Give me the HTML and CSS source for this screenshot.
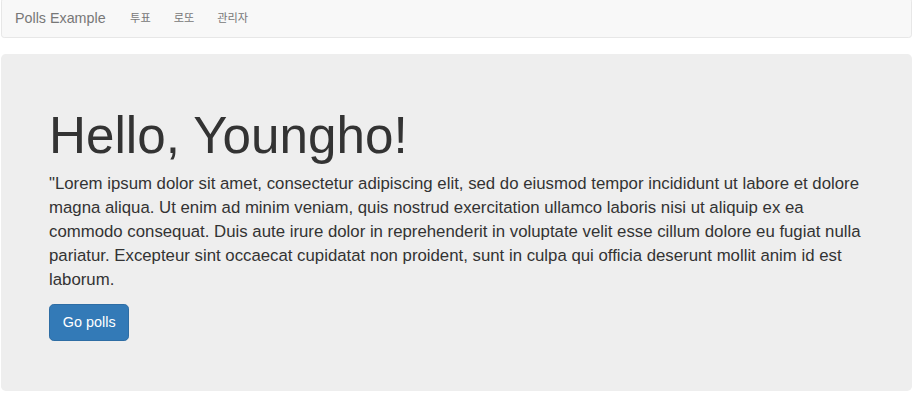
FILE: index.html
```html
<!DOCTYPE html>
<html lang="ko">
<head>
<meta charset="utf-8">
<title>Polls Example</title>
<link rel="stylesheet" href="styles.css">
</head>
<body>
<div class="page">
  <nav class="navbar">
    <a class="brand" href="#">Polls Example</a>
    <ul class="nav">
      <li><a href="#">투표</a></li>
      <li><a href="#">로또</a></li>
      <li><a href="#">관리자</a></li>
    </ul>
  </nav>
  <div class="jumbotron">
    <h1>Hello, Youngho!</h1>
    <p class="lead">"Lorem ipsum dolor sit amet, consectetur adipiscing elit, sed do eiusmod tempor incididunt ut labore et dolore magna aliqua. Ut enim ad minim veniam, quis nostrud exercitation ullamco laboris nisi ut aliquip ex ea commodo consequat. Duis aute irure dolor in reprehenderit in voluptate velit esse cillum dolore eu fugiat nulla pariatur. Excepteur sint occaecat cupidatat non proident, sunt in culpa qui officia deserunt mollit anim id est laborum.</p>
    <p class="actions"><a class="btn" href="#">Go polls</a></p>
  </div>
</div>
</body>
</html>
```

FILE: styles.css
```css
html, body {
  margin: 0;
  padding: 0;
  background: #fff;
}
body {
  font-family: "Liberation Sans", "Noto Sans CJK KR", Arial, sans-serif;
  color: #333;
  font-size: 11.2px;
  line-height: 16px;
}
.page {
  margin-left: 1px;
  width: 911px;
  margin-top: -2px;
}
.navbar {
  box-sizing: border-box;
  height: 40px;
  background: #f8f8f8;
  border: 1px solid #e7e7e7;
  border-radius: 3.2px;
  display: flex;
  align-items: center;
  padding-left: 13px;
  margin-bottom: 16px;
}
.brand {
  color: #777;
  text-decoration: none;
  font-size: 14.3px;
  line-height: 16px;
}
.nav {
  list-style: none;
  margin: 0 0 0 13px;
  padding: 0;
  display: flex;
}
.nav a {
  display: block;
  padding: 0 11.5px;
  color: #777;
  text-decoration: none;
  font-size: 11.2px;
}
.jumbotron {
  background: #eee;
  border-radius: 4.8px;
  padding: 38.4px 48px;
}
.jumbotron h1 {
  margin: 16px 0 8px;
  font-size: 51.2px;
  line-height: 55.4px;
  font-weight: 500;
  color: #333;
}
.lead {
  margin: 0 0 12px;
  font-size: 16.8px;
  line-height: 24px;
  font-weight: 400;
}
.actions {
  margin: 0 0 12px;
}
.btn {
  display: inline-block;
  box-sizing: border-box;
  height: 37px;
  padding: 0 12.8px;
  line-height: 35px;
  font-size: 14.4px;
  color: #fff;
  background: #337ab7;
  border: 1px solid #2e6da4;
  border-radius: 4.8px;
  text-decoration: none;
  vertical-align: top;
}
```
